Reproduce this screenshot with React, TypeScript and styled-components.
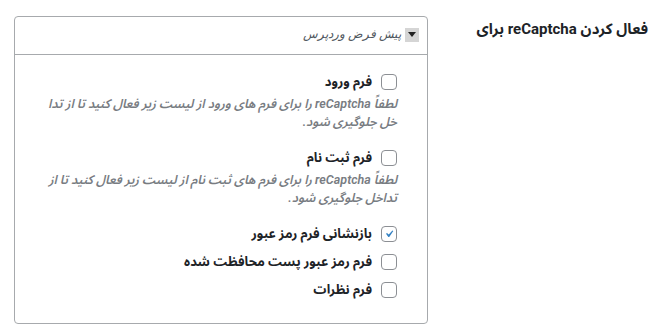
import React from "react";
import styled, { createGlobalStyle } from "styled-components";

const Global = createGlobalStyle`
  html, body { margin: 0; padding: 0; background: #ffffff; }
  body { font-family: Roboto, "Noto Sans Arabic", sans-serif; color: #1d2327; }
`;

const Page = styled.div`
  direction: rtl;
  display: grid;
  grid-template-columns: 220px 414px;
  padding: 16px 14px 0 0;
  width: 662px;
  box-sizing: border-box;
`;

const Heading = styled.div`
  font-size: 15px;
  font-weight: 700;
  line-height: 20px;
  padding-top: 3px;
  color: #1d2327;
`;

const Panel = styled.div`
  border: 1px solid #a7aaad;
  border-radius: 4px;
  height: 308px;
  box-sizing: border-box;
  background: #fff;
  overflow: hidden;
`;

const SelectBar = styled.div`
  height: 35px;
  border-bottom: 1px solid #a7aaad;
  display: flex;
  align-items: center;
  gap: 4px;
  padding: 0 8px 2px 0;
`;

const Arrow = styled.span`
  width: 14px;
  height: 14px;
  background: #d5d5d5;
  display: flex;
  align-items: center;
  justify-content: center;
`;

const SelectText = styled.span`
  font-family: "Liberation Serif", serif;
  font-size: 12px;
  font-style: italic;
  color: #50575e;
`;

const List = styled.ul`
  list-style: none;
  margin: 0;
  padding: 17px 30px 0 0;
  display: flex;
  flex-direction: column;
  gap: 8px;
`;

const Item = styled.li`
  display: flex;
  flex-direction: column;
`;

const LabelRow = styled.label`
  display: flex;
  align-items: center;
  gap: 9px;
  height: 20px;
  font-size: 13px;
  font-weight: 700;
  color: #1d2327;
`;

const Box = styled.span<{ $checked?: boolean }>`
  width: 16px;
  height: 16px;
  box-sizing: border-box;
  border: 1px solid #8c8f94;
  border-radius: 4px;
  background: #fff;
  display: flex;
  align-items: center;
  justify-content: center;
  flex: none;
`;

const Desc = styled.p`
  margin: 3px 0 9px;
  max-width: 350px;
  font-size: 12.5px;
  font-weight: 600;
  line-height: 18px;
  font-style: italic;
  color: #787c82;
`;

const Check = () => (
  <svg width="14" height="14" viewBox="0 0 20 20">
    <path d="M14.83 4.89l1.34.94-5.81 8.38H9.02L5.78 9.67l1.34-1.25 2.57 2.4z" fill="#3582c4" />
  </svg>
);

const Caret = () => (
  <svg width="8" height="5" viewBox="0 0 8 5">
    <path d="M0 0h8L4 5z" fill="#222" />
  </svg>
);

type Opt = { label: string; desc?: string; checked?: boolean };

const options: Opt[] = [
  { label: "فرم ورود", desc: "لطفاً reCaptcha را برای فرم های ورود از لیست زیر فعال کنید تا از تدا خل جلوگیری شود." },
  { label: "فرم ثبت نام", desc: "لطفاً reCaptcha را برای فرم های ثبت نام از لیست زیر فعال کنید تا از تداخل جلوگیری شود." },
  { label: "بازنشانی فرم رمز عبور", checked: true },
  { label: "فرم رمز عبور پست محافظت شده" },
  { label: "فرم نظرات" },
];

export default function App() {
  return (
    <>
      <Global />
      <Page>
        <Heading>فعال کردن reCaptcha برای</Heading>
        <Panel>
          <SelectBar>
            <Arrow>
              <Caret />
            </Arrow>
            <SelectText>پیش فرض وردپرس</SelectText>
          </SelectBar>
          <List>
            {options.map((o) => (
              <Item key={o.label}>
                <LabelRow>
                  <Box $checked={o.checked}>{o.checked && <Check />}</Box>
                  {o.label}
                </LabelRow>
                {o.desc && <Desc>{o.desc}</Desc>}
              </Item>
            ))}
          </List>
        </Panel>
      </Page>
    </>
  );
}
